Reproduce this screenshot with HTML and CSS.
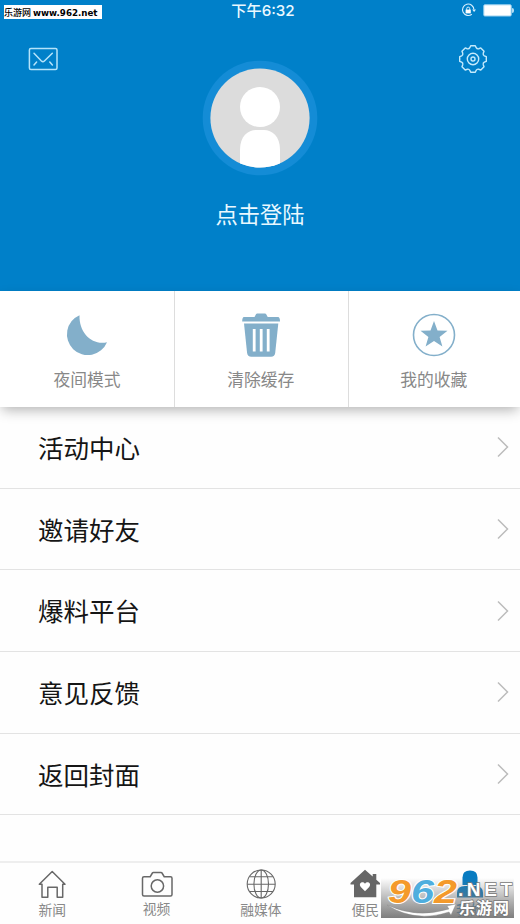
FILE: index.html
```html
<!DOCTYPE html>
<html lang="zh-CN">
<head>
    <meta charset="UTF-8">
    <title>个人中心</title>
    <meta name="viewport" content="width=device-width, initial-scale=1.0">
    <link rel="stylesheet" href="styles.css">
</head>
<body>
    <header class="profile">
        <div class="status-bar">
            <span class="time">下午6:32</span>
            <svg class="status-icons" width="50" height="17" viewBox="0 0 50 17" fill="none" stroke="#d9f0ff">
                <path d="M9.8 14.2A5.7 5.7 0 1 1 11.9 9.6" stroke-width="1.1"/>
                <path d="M10.2 9.6h3.8l-1.9 2.4z" fill="#d9f0ff" stroke="none"/>
                <rect x="3.6" y="9.6" width="5.2" height="3.8" fill="#fff" stroke="none"/>
                <path d="M4.7 10V8.6a1.5 1.5 0 0 1 3 0V10"/>
                <rect x="21.8" y="4.8" width="27.4" height="11.2" rx="1" fill="#fff" stroke="#9bd0ef"/>
            </svg>
            <span class="battery-tip"></span>
        </div>
        <div class="toolbar">
            <svg width="30" height="24" viewBox="0 0 30 24" fill="none" stroke="#b5e3fa" stroke-width="1.5" stroke-linecap="round">
                <rect x="1.4" y="1.4" width="27.6" height="21.2" rx="1.5"/>
                <path d="M6 6.2l7.4 7.8q1.5 1.3 3 0L24.3 6.2M6 18l2.6-3M21.8 15l2.6 3"/>
            </svg>
            <svg width="30" height="30" viewBox="-15 -15 30 30" fill="none" stroke="#c5eafc" stroke-width="1.4" stroke-linejoin="round">
                <path d="M13.3-2.3V2.3L11.3 3.2Q9.8 4 10.25 5.73L11.03 7.78 7.78 11.03 5.73 10.25Q4 9.8 3.2 11.3L2.3 13.3H-2.3L-3.2 11.3Q-4 9.8-5.73 10.25L-7.78 11.03-11.03 7.78-10.25 5.73Q-9.8 4-11.3 3.2L-13.3 2.3V-2.3L-11.3-3.2Q-9.8-4-10.25-5.73L-11.03-7.78-7.78-11.03-5.73-10.25Q-4-9.8-3.2-11.3L-2.3-13.3H2.3L3.2-11.3Q4-9.8 5.73-10.25L7.78-11.03 11.03-7.78 10.25-5.73Q9.8-4 11.3-3.2Z"/>
                <circle r="5.7"/>
                <circle r="2"/>
            </svg>
        </div>
        <svg class="avatar" width="116" height="116" viewBox="-58 -58 116 116">
            <clipPath id="face"><circle r="49.6"/></clipPath>
            <circle r="57.3" fill="#148cd6"/>
            <circle r="49.6" fill="#dcdcdc"/>
            <g fill="#fff" clip-path="url(#face)">
                <circle cy="-11" r="20"/>
                <path d="M-20 50V32C-20 18-12 12-4 12H4C12 12 20 18 20 32V50z"/>
            </g>
        </svg>
        <div class="login">点击登陆</div>
    </header>

    <section class="shortcuts">
        <div class="shortcut">
            <svg width="44" height="44" viewBox="0 0 44 44">
                <path d="M14.5 2.2A20.8 20.8 0 1 0 42 29.2C27 32.5 14 20 14.5 2.2z" fill="#83afca"/>
            </svg>
            <span>夜间模式</span>
        </div>
        <div class="shortcut">
            <svg width="44" height="44" viewBox="0 0 44 44" fill="#83afca">
                <path d="M5 4H15.5L17 1.2q.4-.7 1.2-.7H26q.8 0 1.2.7L28.7 4H39q2 0 2 4.5H3.2Q3.2 4 5 4z"/>
                <path d="M5 10.5H39.3L36.2 40Q35.8 43.7 32 43.7H12.3Q8.5 43.7 8.1 40z"/>
                <path d="M15.2 16V38.5M22.2 16V38.5M29.2 16V38.5" stroke="#fff" stroke-width="2.8"/>
            </svg>
            <span>清除缓存</span>
        </div>
        <div class="shortcut">
            <svg width="44" height="44" viewBox="-22 -22 44 44">
                <circle r="20.5" fill="none" stroke="#83afca" stroke-width="1.6"/>
                <path d="M0-14L3.5-4.6 13.5-4.3 5.6 1.9 8.4 11.6 0 6 -8.4 11.6-5.6 1.9-13.5-4.3-3.5-4.6z" fill="#83afca"/>
            </svg>
            <span>我的收藏</span>
        </div>
    </section>

    <ul class="menu">
        <li><span>活动中心</span><svg width="14" height="22" viewBox="0 0 14 22"><path d="M2 1.5L11.5 11 2 20.5"/></svg></li>
        <li><span>邀请好友</span><svg width="14" height="22" viewBox="0 0 14 22"><path d="M2 1.5L11.5 11 2 20.5"/></svg></li>
        <li><span>爆料平台</span><svg width="14" height="22" viewBox="0 0 14 22"><path d="M2 1.5L11.5 11 2 20.5"/></svg></li>
        <li><span>意见反馈</span><svg width="14" height="22" viewBox="0 0 14 22"><path d="M2 1.5L11.5 11 2 20.5"/></svg></li>
        <li><span>返回封面</span><svg width="14" height="22" viewBox="0 0 14 22"><path d="M2 1.5L11.5 11 2 20.5"/></svg></li>
    </ul>

    <nav class="tabs">
        <div class="tab">
            <svg width="32" height="32" viewBox="0 0 32 32" fill="none" stroke="#686868" stroke-width="1.5" stroke-linejoin="round">
                <path d="M3.3 16.3L16.2 3.5 29 16.3H26.7V29.3H21.2V19.3H11.8V29.3H6V16.3z"/>
            </svg>
            <span>新闻</span>
        </div>
        <div class="tab video">
            <svg width="32" height="32" viewBox="0 0 32 32" fill="none" stroke="#686868" stroke-width="1.5">
                <path d="M3 8.7H9.2L11.4 5q.3-.5 1-.5H20q.7 0 1 .5L23.2 8.7H29.5q1.5 0 1.5 1.5V26.6q0 1.5-1.5 1.5H3q-1.5 0-1.5-1.5V10.2q0-1.5 1.5-1.5z"/>
                <circle cx="16.4" cy="18" r="6.2"/>
            </svg>
            <span>视频</span>
        </div>
        <div class="tab">
            <svg width="32" height="32" viewBox="0 0 32 32" fill="none" stroke="#686868" stroke-width="1.1">
                <circle cx="16.2" cy="16" r="14"/>
                <ellipse cx="16.2" cy="16" rx="7.3" ry="14"/>
                <path d="M16.2 2V30M2.2 16.3H30.2M4.5 8.8H28M4.5 23.5H28"/>
            </svg>
            <span>融媒体</span>
        </div>
        <div class="tab">
            <svg width="32" height="32" viewBox="0 0 32 32">
                <path d="M16 1.7L23.7 8.5V6H27.3V11.7L31 15V16.4H27.3V29.3H5V16.4H1.5V15z" fill="#666"/>
                <path d="M16 23.3L11.8 18.9C9 15.2 13.6 12.3 16 15.8C18.4 12.3 23 15.2 20.2 18.9z" fill="#fff"/>
            </svg>
            <span>便民</span>
        </div>
        <div class="tab active">
            <svg width="32" height="32" viewBox="0 0 32 32" fill="#087bc1">
                <path d="M8.5 17V9.5Q8.5 2.5 16 2.5T23.5 9.5V17z"/>
                <path d="M3 29.5V25Q3 18 11 18H21Q29 18 29 25V29.5z"/>
            </svg>
            <span>我的</span>
        </div>
    </nav>

    <div class="site-tag">乐游网 <b>www.962.net</b></div>

    <svg class="site-logo" width="135" height="44" viewBox="0 0 135 44">
        <defs>
            <linearGradient id="shade" x1="0" y1="0" x2="0" y2="1">
                <stop offset="0" stop-color="#777" stop-opacity="0"/>
                <stop offset=".5" stop-color="#777" stop-opacity=".5"/>
                <stop offset="1" stop-color="#777" stop-opacity=".95"/>
            </linearGradient>
        </defs>
        <rect y="2" width="133" height="40" fill="url(#shade)"/>
        <path d="M6 29Q36 43 68 33L66 30 75 28 70 39 68 36Q34 47 6 29z" fill="#fff" stroke="#888" stroke-width=".4"/>
        <g class="logo-digits">
            <text x="7" y="26.5" textLength="23" lengthAdjust="spacingAndGlyphs" fill="#f49a2b">9</text>
            <text x="30" y="26.5" textLength="23" lengthAdjust="spacingAndGlyphs" fill="#4faede">6</text>
            <text x="53" y="26.5" textLength="23" lengthAdjust="spacingAndGlyphs" fill="#f49a2b">2</text>
        </g>
        <text class="logo-net" x="77" y="20" textLength="54">.NET</text>
        <text class="logo-name" x="78" y="38" textLength="50">乐游网</text>
    </svg>
</body>
</html>
```
FILE: styles.css
```css
* {
    box-sizing: border-box;
}
body {
    position: relative;
    display: flex;
    flex-direction: column;
    height: 924px;
    margin: 0;
    overflow: hidden;
    background: #fefefe;
    font-family: "Liberation Sans", "Noto Sans CJK SC", sans-serif;
}
svg {
    display: block;
    flex: none;
    overflow: visible;
}
.profile {
    height: 291px;
    background: #0080c9;
    color: #e9f8ff;
}
.status-bar {
    display: grid;
    grid-template-columns: 1fr auto 1fr;
    align-items: start;
    height: 22px;
}
.time {
    grid-column: 2;
    padding-left: 6px;
    font-family: Inter, "Noto Sans CJK SC", sans-serif;
    font-size: 15.2px;
    font-weight: 500;
    line-height: 22px;
}
.status-icons {
    justify-self: end;
    margin-right: 8px;
}
.battery-tip {
    position: absolute;
    top: 8px;
    left: 512px;
    width: 2px;
    height: 5px;
    border-radius: 0 2px 2px 0;
    background: #b3dcf3;
}
.toolbar {
    display: flex;
    justify-content: space-between;
    align-items: center;
    height: 30px;
    margin-top: 21.5px;
    padding: 0 32px 0 28px;
}
.avatar {
    margin: -13.5px auto 0;
}
.login {
    margin-top: 23px;
    font-size: 22.3px;
    line-height: 34px;
    text-align: center;
}
.shortcuts {
    position: relative;
    display: grid;
    grid-template-columns: 174px 173.5px 1fr;
    height: 116px;
    background: #fff;
    box-shadow: 0 5px 12px -2px rgba(0, 0, 0, .3);
}
.shortcut {
    display: flex;
    flex-direction: column;
    align-items: center;
    padding-top: 22px;
    color: #888;
    font-size: 16.8px;
}
.shortcut + .shortcut {
    padding-right: 1px;
    border-left: 1px solid #ddd;
}
.shortcut span {
    margin-top: 11px;
    line-height: 26px;
}
.menu {
    margin: 0;
    padding: 0;
    list-style: none;
}
.menu li {
    display: flex;
    justify-content: space-between;
    align-items: center;
    height: 81.7px;
    padding: 0 10px 0 38px;
    border-bottom: 1px solid #e3e3e3;
    color: #151515;
    font-size: 25.5px;
}
.menu span {
    padding-bottom: 2px;
}
.menu path {
    fill: none;
    stroke: #bcbcbc;
    stroke-width: 1.5;
}
.tabs {
    display: grid;
    grid-template-columns: repeat(5, 104.4px);
    height: 63px;
    margin-top: auto;
    border-top: 2px solid #eee;
}
.tab {
    display: flex;
    flex-direction: column;
    align-items: center;
    padding-top: 5px;
    color: #888;
    font-size: 13.8px;
}
.tab span {
    margin-top: 1px;
    line-height: 20px;
}
.tab.video span {
    margin-top: 0;
}
.tab.active {
    color: #087bc1;
}
.site-tag {
    position: absolute;
    top: 5px;
    left: 4px;
    width: 98px;
    height: 14px;
    background: #fff;
    color: #000;
    font: 500 9px/15px "Noto Sans CJK SC", sans-serif;
    white-space: nowrap;
}
.site-tag b {
    font: bold 8.7px/14px "DejaVu Sans", sans-serif;
}
.site-logo {
    position: absolute;
    top: 876px;
    left: 381px;
}
.logo-digits {
    font: italic bold 34px "Liberation Sans", sans-serif;
    stroke: #fff;
    stroke-width: 2px;
    paint-order: stroke;
}
.logo-net {
    font: bold 19px "Liberation Sans", sans-serif;
    fill: #fff;
    stroke: #777;
    stroke-width: 1.5px;
    paint-order: stroke;
}
.logo-name {
    font: bold 16px "Noto Sans CJK SC", sans-serif;
    fill: #fff;
    stroke: #777;
    stroke-width: 1.5px;
    paint-order: stroke;
}
```
